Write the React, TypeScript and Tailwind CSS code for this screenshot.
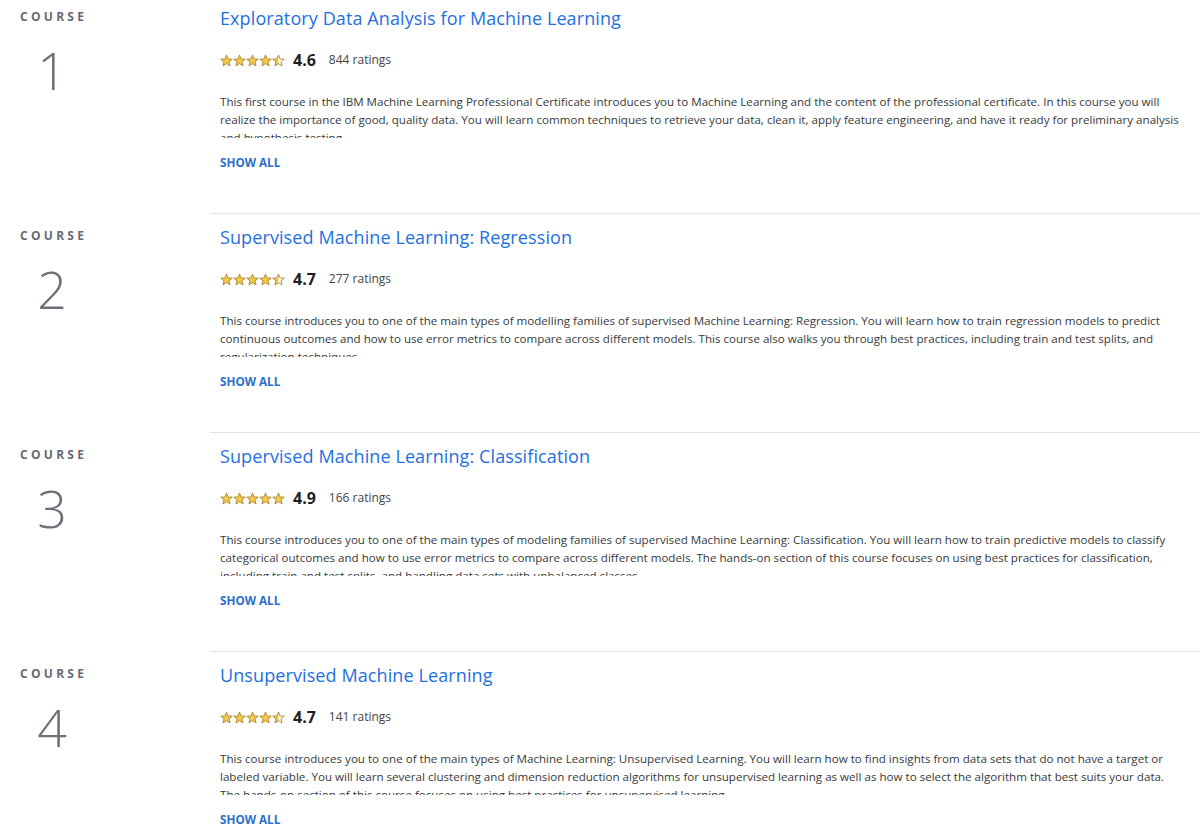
import React from 'react';

type Course = {
  id: number;
  title: string;
  rating: string;
  stars: number;
  count: string;
  description: string;
};

const courses: Course[] = [
  {
    id: 1,
    title: 'Exploratory Data Analysis for Machine Learning',
    rating: '4.6',
    stars: 4.5,
    count: '844 ratings',
    description:
      'This first course in the IBM Machine Learning Professional Certificate introduces you to Machine Learning and the content of the professional certificate. In this course you will realize the importance of good, quality data. You will learn common techniques to retrieve your data, clean it, apply feature engineering, and have it ready for preliminary analysis and hypothesis testing.',
  },
  {
    id: 2,
    title: 'Supervised Machine Learning: Regression',
    rating: '4.7',
    stars: 4.5,
    count: '277 ratings',
    description:
      'This course introduces you to one of the main types of modelling families of supervised Machine Learning: Regression. You will learn how to train regression models to predict continuous outcomes and how to use error metrics to compare across different models. This course also walks you through best practices, including train and test splits, and regularization techniques.',
  },
  {
    id: 3,
    title: 'Supervised Machine Learning: Classification',
    rating: '4.9',
    stars: 5,
    count: '166 ratings',
    description:
      'This course introduces you to one of the main types of modeling families of supervised Machine Learning: Classification. You will learn how to train predictive models to classify categorical outcomes and how to use error metrics to compare across different models. The hands-on section of this course focuses on using best practices for classification, including train and test splits, and handling data sets with unbalanced classes.',
  },
  {
    id: 4,
    title: 'Unsupervised Machine Learning',
    rating: '4.7',
    stars: 4.5,
    count: '141 ratings',
    description:
      'This course introduces you to one of the main types of Machine Learning: Unsupervised Learning. You will learn how to find insights from data sets that do not have a target or labeled variable. You will learn several clustering and dimension reduction algorithms for unsupervised learning as well as how to select the algorithm that best suits your data. The hands-on section of this course focuses on using best practices for unsupervised learning.',
  },
];

const STAR =
  'M6 0.9 L7.41 4.56 L11.33 4.77 L8.28 7.24 L9.29 11.03 L6 8.9 L2.71 11.03 L3.72 7.24 L0.67 4.77 L4.59 4.56 Z';
const HALF = 'M6 0.9 L4.59 4.56 L0.67 4.77 L3.72 7.24 L2.71 11.03 L6 8.9 Z';

function Star({ half }: { half?: boolean }) {
  return (
    <svg width="13" height="13" viewBox="0 0 12 12">
      {half ? (
        <>
          <path d={STAR} fill="#ffffff" />
          <path d={HALF} fill="#f2c94c" />
          <path d={STAR} fill="none" stroke="#a9842a" strokeWidth="0.8" strokeLinejoin="round" />
        </>
      ) : (
        <path d={STAR} fill="#f2c94c" stroke="#a9842a" strokeWidth="0.8" strokeLinejoin="round" />
      )}
    </svg>
  );
}

function Stars({ value }: { value: number }) {
  return (
    <div className="flex items-center">
      {[0, 1, 2, 3, 4].map((i) => (
        <Star key={i} half={value - i < 1} />
      ))}
    </div>
  );
}

function CourseRow({ course, first }: { course: Course; first: boolean }) {
  return (
    <div className={first ? 'flex pt-[6px] pb-[43px]' : 'flex pt-[11px] pb-[43px]'}>
      <div className="w-[210px] shrink-0">
        <div className="ml-5 w-[64px] flex flex-col items-center">
          <div className="mt-[3px] text-[12px] leading-[16px] font-bold tracking-[3.3px] text-[#646a73] pl-[3.3px]">
            COURSE
          </div>
          <div className="mt-[19px] text-[52px] leading-none font-light text-[#6b7079]">
            {course.id}
          </div>
        </div>
      </div>
      <div className="flex-1 pl-[10px] pr-[18px]">
        <a className="block text-[18px] leading-[24px] text-[#1f70e0] tracking-[0.1px]">
          {course.title}
        </a>
        <div className="mt-[20px] h-[20px] flex items-center">
          <Stars value={course.stars} />
          <span className="ml-[8px] text-[16px] font-bold text-[#1f1f1f]">{course.rating}</span>
          <span className="ml-[13px] text-[12px] text-[#444]">{course.count}</span>
        </div>
        <p className="mt-[23px] max-h-[45px] overflow-hidden text-[11.6px] leading-[18px] text-[#373a3c]">
          {course.description}
        </p>
        <a className="block mt-[16px] text-[11.7px] leading-[16px] font-bold text-[#2a6fcc]">SHOW ALL</a>
      </div>
    </div>
  );
}

export default function App() {
  return (
    <div className="w-[1200px] h-[834px] overflow-hidden bg-white" style={{ fontFamily: '"Open Sans", "Noto Sans", sans-serif' }}>
      {courses.map((c, i) => (
        <React.Fragment key={c.id}>
          {i > 0 && <div className="ml-[210px] h-px bg-[#e3e3e3]" />}
          <CourseRow course={c} first={i === 0} />
        </React.Fragment>
      ))}
    </div>
  );
}
